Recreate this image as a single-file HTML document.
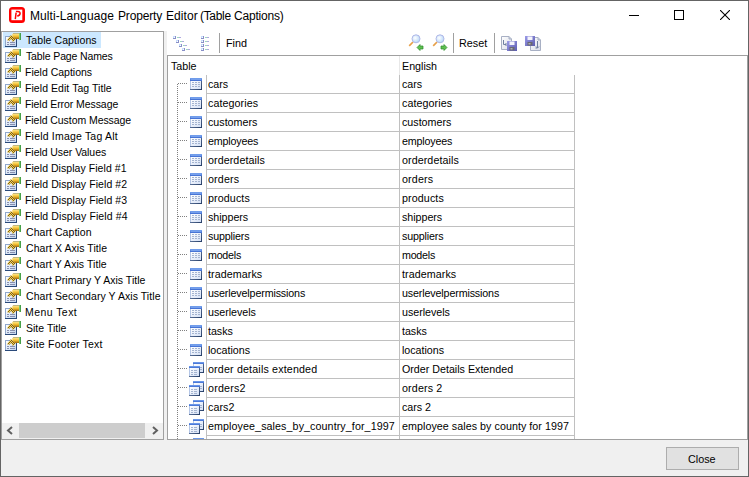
<!DOCTYPE html>
<html><head><meta charset="utf-8"><style>
*{margin:0;padding:0;box-sizing:border-box}
html,body{width:749px;height:477px;overflow:hidden;background:#f0f0f0;font-family:"Liberation Sans",sans-serif;color:#000}
.a{position:absolute}
#frame{left:0;top:0;width:749px;height:477px;border:1px solid #646464;background:#f0f0f0}
#title{left:1px;top:1px;width:747px;height:30px;background:#fff}
.tt{top:8px;font-size:12px;line-height:16px;white-space:nowrap;color:#000}
#list{left:1px;top:31px;width:163px;height:409px;border:1px solid #a0a0a0;background:#fff;overflow:hidden}
.li{position:absolute;left:0;height:16px;width:161px}
.li svg{position:absolute;left:1px;top:0px}
.li span{position:absolute;left:24px;top:0;font-size:10.5px;line-height:16px;white-space:nowrap}
.sel{background:#cce8ff}
#hsb{left:2px;top:423px;width:161px;height:16px;background:#f0f0f0}
#toolbar{left:167px;top:31px;width:581px;height:24px;background:#fff}
#split{left:164px;top:31px;width:3px;height:409px;background:#f0f0f0}
#grid{left:167px;top:55px;width:581px;height:385px;border:1px solid #a0a0a0;background:#fff;overflow:hidden}
.gt{position:absolute;font-size:10.7px;line-height:19px;white-space:nowrap}
.hl{position:absolute;height:1px;background:#c0c0c0}
.vl{position:absolute;width:1px;background:#c0c0c0}
#btn{left:666px;top:447px;width:73px;height:23px;background:#e1e1e1;border:1px solid #adadad}
</style></head><body>
<svg width="0" height="0" style="position:absolute">
<defs>
<linearGradient id="formg" x1="0" y1="0" x2="1" y2="1"><stop offset="0" stop-color="#ffffff"/><stop offset="1" stop-color="#c0d4f0"/></linearGradient>
<linearGradient id="tubeg" x1="0" y1="0" x2="0" y2="1"><stop offset="0" stop-color="#fff4b0"/><stop offset="0.55" stop-color="#f4c030"/><stop offset="1" stop-color="#a06a10"/></linearGradient>
<pattern id="chk" x="0" y="0" width="2" height="2" patternUnits="userSpaceOnUse"><rect width="2" height="2" fill="#f8d850"/><rect width="1" height="1" fill="#7a5a20"/><rect x="1" y="1" width="1" height="1" fill="#7a5a20"/></pattern>
<symbol id="li" viewBox="0 0 20 16">
<rect x="2" y="4" width="12" height="11" fill="#2a4a7a"/>
<rect x="2" y="4" width="11" height="10" fill="#90a8cc"/>
<rect x="3" y="5" width="10" height="9" fill="url(#formg)"/>
<rect x="4" y="10" width="2" height="1" fill="#8890b0"/><rect x="7" y="10" width="5" height="1" fill="#8890b0"/>
<rect x="4" y="12" width="2" height="1" fill="#8890b0"/><rect x="7" y="12" width="5" height="1" fill="#8890b0"/>
<path d="M4 8 L8 3 L13 7 L10 10 L8 7 L6 9 Z" fill="url(#chk)"/>
<path d="M9 2.5 Q9.5 1 11 1 L16 1 L16 7 L12 7 Q10.5 6.5 10 5 Z" fill="url(#tubeg)"/><rect x="10" y="1" width="6" height="0.8" fill="#a09870" opacity="0.8"/>
<rect x="16" y="1" width="2" height="7" fill="#7cc878"/><rect x="17" y="1" width="1" height="7" fill="#48a048"/>
</symbol>
<linearGradient id="tblhead" x1="0" y1="0" x2="0" y2="1"><stop offset="0" stop-color="#7aa6f0"/><stop offset="1" stop-color="#3c6ad0"/></linearGradient>
<linearGradient id="tbody" x1="0" y1="0" x2="1" y2="1"><stop offset="0" stop-color="#ffffff"/><stop offset="1" stop-color="#d4e0f6"/></linearGradient>
<linearGradient id="tshad" x1="0" y1="0" x2="1" y2="1"><stop offset="0" stop-color="#8aa0c8"/><stop offset="1" stop-color="#243c64"/></linearGradient>
<symbol id="tbl" viewBox="0 0 12 12">
<rect x="0" y="0" width="12" height="12" fill="url(#tshad)"/>
<rect x="0" y="0" width="11" height="11" fill="#b4c6e6"/>
<rect x="1" y="3" width="10" height="8" fill="url(#tbody)"/>
<rect x="0" y="0" width="12" height="3" fill="url(#tblhead)"/>
<rect x="1" y="1" width="10" height="1" fill="#88b0f4" opacity="0.6"/>
<g fill="#a4b4d0"><rect x="2" y="4" width="2" height="1"/><rect x="5" y="4" width="2" height="1"/><rect x="8" y="4" width="2" height="1"/>
<rect x="2" y="6" width="2" height="1"/><rect x="5" y="6" width="2" height="1"/><rect x="8" y="6" width="2" height="1"/>
<rect x="2" y="8" width="2" height="1"/><rect x="5" y="8" width="2" height="1"/><rect x="8" y="8" width="2" height="1"/></g>
</symbol>
<symbol id="view" viewBox="0 0 15 15">
<rect x="4" y="0" width="11" height="11" fill="url(#tshad)"/>
<rect x="4" y="0" width="10" height="10" fill="#b4c6e6"/>
<rect x="5" y="2" width="9" height="8" fill="url(#tbody)"/>
<rect x="4" y="0" width="11" height="2" fill="url(#tblhead)"/>
<g fill="#a4b4d0"><rect x="11" y="5" width="2" height="1"/><rect x="11" y="7" width="2" height="1"/></g>
<rect x="0" y="4" width="11" height="11" fill="url(#tshad)"/>
<rect x="0" y="4" width="10" height="10" fill="#b4c6e6"/>
<rect x="1" y="6" width="9" height="8" fill="url(#tbody)"/>
<rect x="0" y="4" width="11" height="2" fill="url(#tblhead)"/>
<g fill="#a4b4d0"><rect x="2" y="8" width="2" height="1"/><rect x="5" y="8" width="3" height="1"/><rect x="2" y="10" width="2" height="1"/><rect x="5" y="10" width="3" height="1"/><rect x="2" y="12" width="2" height="1"/><rect x="5" y="12" width="3" height="1"/></g>
</symbol>
</defs></svg>
<div id="frame" class="a"></div>
<div id="title" class="a"></div>

<svg class="a" style="left:9px;top:7px" width="16" height="16" viewBox="0 0 16 16">
<rect x="0" y="0" width="16" height="16" rx="3.5" fill="#ff0000"/>
<rect x="2.4" y="2.6" width="10.9" height="10.6" fill="#fff"/>
<path d="M6.3 12.2 L7.1 5.6" stroke="#ff0000" stroke-width="1.5" fill="none"/>
<path d="M6.9 4.6 Q11.2 4 11.1 6.4 Q11 8.7 8.2 9.1" stroke="#ff0000" stroke-width="1.5" fill="none"/>
</svg>
<div class="a tt" style="left:30px;letter-spacing:0.085px">Multi-Language</div><div class="a tt" style="left:118px;letter-spacing:-0.171px">Property</div><div class="a tt" style="left:166px;letter-spacing:0.08px">Editor</div><div class="a tt" style="left:200px;letter-spacing:-0.32px">(Table</div><div class="a tt" style="left:234px;letter-spacing:-0.2px">Captions)</div>
<svg class="a" style="left:629px;top:15px" width="10" height="1"><rect width="10" height="1" fill="#000"/></svg>
<svg class="a" style="left:674px;top:10px" width="10" height="10"><rect x="0.5" y="0.5" width="9" height="9" fill="none" stroke="#000"/></svg>
<svg class="a" style="left:720px;top:10px" width="10" height="10"><path d="M0 0 L10 10 M10 0 L0 10" stroke="#000" stroke-width="1.1"/></svg>

<div id="list" class="a">
<div class="li" style="top:0px"><div class="sel a" style="left:1px;top:0;width:98px;height:16px"></div><svg width="20" height="16"><use href="#li"/></svg><span style="letter-spacing:0.085px;">Table Captions</span></div>
<div class="li" style="top:16px"><svg width="20" height="16"><use href="#li"/></svg><span style="letter-spacing:-0.127px;">Table Page Names</span></div>
<div class="li" style="top:32px"><svg width="20" height="16"><use href="#li"/></svg><span style="left:23px;">Field Captions</span></div>
<div class="li" style="top:48px"><svg width="20" height="16"><use href="#li"/></svg><span style="letter-spacing:0.058px;left:23px;">Field Edit Tag Title</span></div>
<div class="li" style="top:64px"><svg width="20" height="16"><use href="#li"/></svg><span style="letter-spacing:-0.072px;left:23px;">Field Error Message</span></div>
<div class="li" style="top:80px"><svg width="20" height="16"><use href="#li"/></svg><span style="letter-spacing:-0.063px;left:23px;">Field Custom Message</span></div>
<div class="li" style="top:96px"><svg width="20" height="16"><use href="#li"/></svg><span style="letter-spacing:0.194px;left:23px;">Field Image Tag Alt</span></div>
<div class="li" style="top:112px"><svg width="20" height="16"><use href="#li"/></svg><span style="letter-spacing:-0.056px;left:23px;">Field User Values</span></div>
<div class="li" style="top:128px"><svg width="20" height="16"><use href="#li"/></svg><span style="letter-spacing:0.052px;left:23px;">Field Display Field #1</span></div>
<div class="li" style="top:144px"><svg width="20" height="16"><use href="#li"/></svg><span style="letter-spacing:0.081px;left:23px;">Field Display Field #2</span></div>
<div class="li" style="top:160px"><svg width="20" height="16"><use href="#li"/></svg><span style="letter-spacing:0.081px;left:23px;">Field Display Field #3</span></div>
<div class="li" style="top:176px"><svg width="20" height="16"><use href="#li"/></svg><span style="letter-spacing:0.1px;left:23px;">Field Display Field #4</span></div>
<div class="li" style="top:192px"><svg width="20" height="16"><use href="#li"/></svg><span style="letter-spacing:0.058px;">Chart Caption</span></div>
<div class="li" style="top:208px"><svg width="20" height="16"><use href="#li"/></svg><span style="letter-spacing:0.065px;">Chart X Axis Title</span></div>
<div class="li" style="top:224px"><svg width="20" height="16"><use href="#li"/></svg><span style="letter-spacing:0.065px;">Chart Y Axis Title</span></div>
<div class="li" style="top:240px"><svg width="20" height="16"><use href="#li"/></svg><span style="letter-spacing:0.032px;">Chart Primary Y Axis Title</span></div>
<div class="li" style="top:256px"><svg width="20" height="16"><use href="#li"/></svg><span style="letter-spacing:0.067px;">Chart Secondary Y Axis Title</span></div>
<div class="li" style="top:272px"><svg width="20" height="16"><use href="#li"/></svg><span style="letter-spacing:0.438px;left:23px;">Menu Text</span></div>
<div class="li" style="top:288px"><svg width="20" height="16"><use href="#li"/></svg><span style="letter-spacing:0.011px;">Site Title</span></div>
<div class="li" style="top:304px"><svg width="20" height="16"><use href="#li"/></svg><span style="letter-spacing:0.207px;">Site Footer Text</span></div>
</div>
<div id="hsb" class="a">
<div class="a" style="left:17px;top:0px;width:126px;height:15px;background:#cdcdcd"></div>
<svg class="a" style="left:4px;top:3px" width="8" height="9" viewBox="0 0 8 9"><path d="M6 1 L2 4.5 L6 8" fill="none" stroke="#606060" stroke-width="2"/></svg>
<svg class="a" style="left:149px;top:3px" width="8" height="9" viewBox="0 0 8 9"><path d="M2 1 L6 4.5 L2 8" fill="none" stroke="#606060" stroke-width="2"/></svg>
</div>
<div id="split" class="a"></div><div id="toolbar" class="a"></div>
<svg class="a" style="left:168px;top:32px" width="50" height="22" viewBox="0 0 50 22"><rect x="5" y="4" width="3" height="3" fill="#8890c8"/><rect x="5" y="4" width="2" height="2" fill="#c8dcfc"/><rect x="6" y="5" width="1" height="1" fill="#fff"/><rect x="9" y="5" width="2" height="1" fill="#a0d8c0"/><rect x="11" y="5" width="2" height="1" fill="#b0a8e0"/><rect x="33" y="4" width="3" height="3" fill="#8890c8"/><rect x="33" y="4" width="2" height="2" fill="#c8dcfc"/><rect x="34" y="5" width="1" height="1" fill="#fff"/><rect x="37" y="5" width="2" height="1" fill="#a0d8c0"/><rect x="39" y="5" width="2" height="1" fill="#b0a8e0"/><rect x="8" y="8" width="3" height="3" fill="#8890c8"/><rect x="8" y="8" width="2" height="2" fill="#c8dcfc"/><rect x="9" y="9" width="1" height="1" fill="#fff"/><rect x="12" y="9" width="2" height="1" fill="#a0d8c0"/><rect x="14" y="9" width="2" height="1" fill="#b0a8e0"/><rect x="33" y="8" width="3" height="3" fill="#8890c8"/><rect x="33" y="8" width="2" height="2" fill="#c8dcfc"/><rect x="34" y="9" width="1" height="1" fill="#fff"/><rect x="37" y="9" width="2" height="1" fill="#a0d8c0"/><rect x="39" y="9" width="2" height="1" fill="#b0a8e0"/><rect x="11" y="12" width="3" height="3" fill="#8890c8"/><rect x="11" y="12" width="2" height="2" fill="#c8dcfc"/><rect x="12" y="13" width="1" height="1" fill="#fff"/><rect x="15" y="13" width="2" height="1" fill="#a0d8c0"/><rect x="17" y="13" width="2" height="1" fill="#b0a8e0"/><rect x="33" y="12" width="3" height="3" fill="#8890c8"/><rect x="33" y="12" width="2" height="2" fill="#c8dcfc"/><rect x="34" y="13" width="1" height="1" fill="#fff"/><rect x="37" y="13" width="2" height="1" fill="#a0d8c0"/><rect x="39" y="13" width="2" height="1" fill="#b0a8e0"/><rect x="14" y="16" width="3" height="3" fill="#8890c8"/><rect x="14" y="16" width="2" height="2" fill="#c8dcfc"/><rect x="15" y="17" width="1" height="1" fill="#fff"/><rect x="18" y="17" width="2" height="1" fill="#a0d8c0"/><rect x="20" y="17" width="2" height="1" fill="#b0a8e0"/><rect x="33" y="16" width="3" height="3" fill="#8890c8"/><rect x="33" y="16" width="2" height="2" fill="#c8dcfc"/><rect x="34" y="17" width="1" height="1" fill="#fff"/><rect x="37" y="17" width="2" height="1" fill="#a0d8c0"/><rect x="39" y="17" width="2" height="1" fill="#b0a8e0"/></svg>
<div class="a" style="left:219px;top:33px;width:1px;height:20px;background:#a0a0a0"></div>
<div class="a" style="left:226px;top:35px;font-size:10.8px;line-height:16px">Find</div>
<svg class="a" style="left:406px;top:33px" width="22" height="20" viewBox="0 0 22 20"><defs><radialGradient id="lens406" cx="0.4" cy="0.4" r="0.6"><stop offset="0" stop-color="#ffffff"/><stop offset="1" stop-color="#b8d8f8"/></radialGradient></defs><line x1="3.2" y1="12.8" x2="7" y2="9" stroke="#e8a048" stroke-width="1.7"/><circle cx="10" cy="5.8" r="4" fill="url(#lens406)" stroke="#b0b8e8" stroke-width="1"/><path d="M11 14.5 L14 11.5 L14 13 L17 13 L17 16 L14 16 L14 17.5 Z" fill="#60c050" stroke="#2a8a2a" stroke-width="0.7" stroke-linejoin="round"/></svg>
<svg class="a" style="left:430px;top:33px" width="22" height="20" viewBox="0 0 22 20"><defs><radialGradient id="lens430" cx="0.4" cy="0.4" r="0.6"><stop offset="0" stop-color="#ffffff"/><stop offset="1" stop-color="#b8d8f8"/></radialGradient></defs><line x1="3.2" y1="12.8" x2="7" y2="9" stroke="#e8a048" stroke-width="1.7"/><circle cx="10" cy="5.8" r="4" fill="url(#lens430)" stroke="#b0b8e8" stroke-width="1"/><path d="M17 14.5 L14 11.5 L14 13 L11 13 L11 16 L14 16 L14 17.5 Z" fill="#60c050" stroke="#2a8a2a" stroke-width="0.7" stroke-linejoin="round"/></svg>
<div class="a" style="left:453px;top:33px;width:1px;height:20px;background:#a0a0a0"></div>
<div class="a" style="left:459px;top:35px;font-size:10.8px;line-height:16px">Reset</div>
<div class="a" style="left:494px;top:33px;width:1px;height:20px;background:#a0a0a0"></div>
<svg class="a" style="left:501px;top:36px" width="16" height="15" viewBox="0 0 16 15">
<defs><linearGradient id="docg" x1="0" y1="0" x2="1" y2="1"><stop offset="0" stop-color="#ffffff"/><stop offset="1" stop-color="#d8dce8"/></linearGradient>
<linearGradient id="flg" x1="0" y1="0" x2="1" y2="1"><stop offset="0" stop-color="#9c9ce8"/><stop offset="1" stop-color="#5c5cb0"/></linearGradient></defs>
<path d="M0.5 0.5 H8 L10.5 3 V13.5 H0.5 Z" fill="url(#docg)" stroke="#a8b0c4"/>
<path d="M8 0.5 V3 H10.5" fill="#c8d0e0" stroke="#a8b0c4"/>
<path d="M2.5 4 V8.5 H5" fill="none" stroke="#7080a0" stroke-width="1"/><path d="M4.5 7 L6 8.5 L4.5 10" fill="none" stroke="#7080a0"/>
<rect x="6" y="5" width="10" height="10" fill="url(#flg)"/>
<rect x="8.5" y="5.5" width="5" height="3.5" fill="#f4f4fc"/>
<rect x="8.5" y="11" width="5" height="3.5" fill="#686870"/><rect x="9.5" y="12" width="2" height="1.5" fill="#b0b0b8"/>
</svg>
<svg class="a" style="left:525px;top:36px" width="17" height="15" viewBox="0 0 17 15">
<path d="M5.5 1.5 H13 L15.5 4 V14.5 H5.5 Z" fill="url(#docg)" stroke="#a8b0c4"/>
<path d="M13 1.5 V4 H15.5" fill="#c8d0e0" stroke="#a8b0c4"/>
<path d="M12.5 5 V12 H10.5" fill="none" stroke="#7080a0"/><path d="M14 10.5 L12.5 12 L11 10.5" fill="none" stroke="#7080a0"/>
<rect x="0" y="0" width="10" height="10" fill="url(#flg)"/>
<rect x="2.5" y="0.5" width="5" height="3.5" fill="#f4f4fc"/>
<rect x="2.5" y="6" width="5" height="3.5" fill="#686870"/><rect x="3.5" y="7" width="2" height="1.5" fill="#b0b0b8"/>
</svg>
<div id="grid" class="a">
<div class="gt" style="left:3px;top:1px">Table</div>
<div class="gt" style="left:234px;top:1px">English</div>
<div class="vl" style="left:231px;top:0;height:19px;background:#e8e8e8"></div>
<div class="vl" style="left:38px;top:19px;height:400px"></div>
<div class="vl" style="left:231px;top:19px;height:400px"></div>
<div class="vl" style="left:406px;top:19px;height:400px"></div>
<div class="a" style="left:9px;top:28px;width:1px;height:400px;background:repeating-linear-gradient(#808080 0 1px, transparent 1px 2px)"></div>
<div class="hl" style="left:38px;top:37px;width:369px"></div>
<div class="a" style="left:10px;top:27px;width:10px;height:1px;background:repeating-linear-gradient(90deg,#808080 0 1px, transparent 1px 2px)"></div>
<svg class="a" style="left:22px;top:22px" width="12" height="12"><use href="#tbl"/></svg>
<div class="gt" style="left:40px;top:19px;letter-spacing:-0.033px;">cars</div>
<div class="gt" style="left:234px;top:19px;letter-spacing:-0.033px;">cars</div>
<div class="hl" style="left:38px;top:56px;width:369px"></div>
<div class="a" style="left:10px;top:46px;width:10px;height:1px;background:repeating-linear-gradient(90deg,#808080 0 1px, transparent 1px 2px)"></div>
<svg class="a" style="left:22px;top:41px" width="12" height="12"><use href="#tbl"/></svg>
<div class="gt" style="left:40px;top:38px;letter-spacing:0.089px;">categories</div>
<div class="gt" style="left:234px;top:38px;letter-spacing:0.089px;">categories</div>
<div class="hl" style="left:38px;top:75px;width:369px"></div>
<div class="a" style="left:10px;top:65px;width:10px;height:1px;background:repeating-linear-gradient(90deg,#808080 0 1px, transparent 1px 2px)"></div>
<svg class="a" style="left:22px;top:60px" width="12" height="12"><use href="#tbl"/></svg>
<div class="gt" style="left:40px;top:57px;">customers</div>
<div class="gt" style="left:234px;top:57px;">customers</div>
<div class="hl" style="left:38px;top:94px;width:369px"></div>
<div class="a" style="left:10px;top:84px;width:10px;height:1px;background:repeating-linear-gradient(90deg,#808080 0 1px, transparent 1px 2px)"></div>
<svg class="a" style="left:22px;top:79px" width="12" height="12"><use href="#tbl"/></svg>
<div class="gt" style="left:40px;top:76px;letter-spacing:-0.162px;">employees</div>
<div class="gt" style="left:234px;top:76px;letter-spacing:-0.162px;">employees</div>
<div class="hl" style="left:38px;top:113px;width:369px"></div>
<div class="a" style="left:10px;top:103px;width:10px;height:1px;background:repeating-linear-gradient(90deg,#808080 0 1px, transparent 1px 2px)"></div>
<svg class="a" style="left:22px;top:98px" width="12" height="12"><use href="#tbl"/></svg>
<div class="gt" style="left:40px;top:95px;letter-spacing:0.082px;">orderdetails</div>
<div class="gt" style="left:234px;top:95px;letter-spacing:0.082px;">orderdetails</div>
<div class="hl" style="left:38px;top:132px;width:369px"></div>
<div class="a" style="left:10px;top:122px;width:10px;height:1px;background:repeating-linear-gradient(90deg,#808080 0 1px, transparent 1px 2px)"></div>
<svg class="a" style="left:22px;top:117px" width="12" height="12"><use href="#tbl"/></svg>
<div class="gt" style="left:40px;top:114px;letter-spacing:0.16px;">orders</div>
<div class="gt" style="left:234px;top:114px;letter-spacing:0.16px;">orders</div>
<div class="hl" style="left:38px;top:151px;width:369px"></div>
<div class="a" style="left:10px;top:141px;width:10px;height:1px;background:repeating-linear-gradient(90deg,#808080 0 1px, transparent 1px 2px)"></div>
<svg class="a" style="left:22px;top:136px" width="12" height="12"><use href="#tbl"/></svg>
<div class="gt" style="left:40px;top:133px;letter-spacing:0.114px;">products</div>
<div class="gt" style="left:234px;top:133px;letter-spacing:0.114px;">products</div>
<div class="hl" style="left:38px;top:170px;width:369px"></div>
<div class="a" style="left:10px;top:160px;width:10px;height:1px;background:repeating-linear-gradient(90deg,#808080 0 1px, transparent 1px 2px)"></div>
<svg class="a" style="left:22px;top:155px" width="12" height="12"><use href="#tbl"/></svg>
<div class="gt" style="left:40px;top:152px;letter-spacing:-0.029px;">shippers</div>
<div class="gt" style="left:234px;top:152px;letter-spacing:-0.029px;">shippers</div>
<div class="hl" style="left:38px;top:189px;width:369px"></div>
<div class="a" style="left:10px;top:179px;width:10px;height:1px;background:repeating-linear-gradient(90deg,#808080 0 1px, transparent 1px 2px)"></div>
<svg class="a" style="left:22px;top:174px" width="12" height="12"><use href="#tbl"/></svg>
<div class="gt" style="left:40px;top:171px;letter-spacing:-0.15px;">suppliers</div>
<div class="gt" style="left:234px;top:171px;letter-spacing:-0.15px;">suppliers</div>
<div class="hl" style="left:38px;top:208px;width:369px"></div>
<div class="a" style="left:10px;top:198px;width:10px;height:1px;background:repeating-linear-gradient(90deg,#808080 0 1px, transparent 1px 2px)"></div>
<svg class="a" style="left:22px;top:193px" width="12" height="12"><use href="#tbl"/></svg>
<div class="gt" style="left:40px;top:190px;letter-spacing:-0.24px;">models</div>
<div class="gt" style="left:234px;top:190px;letter-spacing:-0.24px;">models</div>
<div class="hl" style="left:38px;top:227px;width:369px"></div>
<div class="a" style="left:10px;top:217px;width:10px;height:1px;background:repeating-linear-gradient(90deg,#808080 0 1px, transparent 1px 2px)"></div>
<svg class="a" style="left:22px;top:212px" width="12" height="12"><use href="#tbl"/></svg>
<div class="gt" style="left:40px;top:209px;letter-spacing:0.078px;">trademarks</div>
<div class="gt" style="left:234px;top:209px;letter-spacing:0.078px;">trademarks</div>
<div class="hl" style="left:38px;top:246px;width:369px"></div>
<div class="a" style="left:10px;top:236px;width:10px;height:1px;background:repeating-linear-gradient(90deg,#808080 0 1px, transparent 1px 2px)"></div>
<svg class="a" style="left:22px;top:231px" width="12" height="12"><use href="#tbl"/></svg>
<div class="gt" style="left:40px;top:228px;letter-spacing:-0.132px;">userlevelpermissions</div>
<div class="gt" style="left:234px;top:228px;letter-spacing:-0.132px;">userlevelpermissions</div>
<div class="hl" style="left:38px;top:265px;width:369px"></div>
<div class="a" style="left:10px;top:255px;width:10px;height:1px;background:repeating-linear-gradient(90deg,#808080 0 1px, transparent 1px 2px)"></div>
<svg class="a" style="left:22px;top:250px" width="12" height="12"><use href="#tbl"/></svg>
<div class="gt" style="left:40px;top:247px;letter-spacing:-0.022px;">userlevels</div>
<div class="gt" style="left:234px;top:247px;letter-spacing:-0.022px;">userlevels</div>
<div class="hl" style="left:38px;top:284px;width:369px"></div>
<div class="a" style="left:10px;top:274px;width:10px;height:1px;background:repeating-linear-gradient(90deg,#808080 0 1px, transparent 1px 2px)"></div>
<svg class="a" style="left:22px;top:269px" width="12" height="12"><use href="#tbl"/></svg>
<div class="gt" style="left:40px;top:266px;letter-spacing:-0.025px;">tasks</div>
<div class="gt" style="left:234px;top:266px;letter-spacing:-0.025px;">tasks</div>
<div class="hl" style="left:38px;top:303px;width:369px"></div>
<div class="a" style="left:10px;top:293px;width:10px;height:1px;background:repeating-linear-gradient(90deg,#808080 0 1px, transparent 1px 2px)"></div>
<svg class="a" style="left:22px;top:288px" width="12" height="12"><use href="#tbl"/></svg>
<div class="gt" style="left:40px;top:285px;letter-spacing:-0.025px;">locations</div>
<div class="gt" style="left:234px;top:285px;letter-spacing:-0.025px;">locations</div>
<div class="hl" style="left:38px;top:322px;width:369px"></div>
<div class="a" style="left:10px;top:312px;width:10px;height:1px;background:repeating-linear-gradient(90deg,#808080 0 1px, transparent 1px 2px)"></div>
<svg class="a" style="left:21px;top:306px" width="15" height="15"><use href="#view"/></svg>
<div class="gt" style="left:40px;top:304px;letter-spacing:0.162px;">order details extended</div>
<div class="gt" style="left:234px;top:304px;">Order Details Extended</div>
<div class="hl" style="left:38px;top:341px;width:369px"></div>
<div class="a" style="left:10px;top:331px;width:10px;height:1px;background:repeating-linear-gradient(90deg,#808080 0 1px, transparent 1px 2px)"></div>
<svg class="a" style="left:21px;top:325px" width="15" height="15"><use href="#view"/></svg>
<div class="gt" style="left:40px;top:323px;letter-spacing:0.217px;">orders2</div>
<div class="gt" style="left:234px;top:323px;letter-spacing:0.157px;">orders 2</div>
<div class="hl" style="left:38px;top:360px;width:369px"></div>
<div class="a" style="left:10px;top:350px;width:10px;height:1px;background:repeating-linear-gradient(90deg,#808080 0 1px, transparent 1px 2px)"></div>
<svg class="a" style="left:21px;top:344px" width="15" height="15"><use href="#view"/></svg>
<div class="gt" style="left:40px;top:342px;letter-spacing:0.075px;">cars2</div>
<div class="gt" style="left:234px;top:342px;letter-spacing:-0.02px;">cars 2</div>
<div class="hl" style="left:38px;top:379px;width:369px"></div>
<div class="a" style="left:10px;top:369px;width:10px;height:1px;background:repeating-linear-gradient(90deg,#808080 0 1px, transparent 1px 2px)"></div>
<svg class="a" style="left:21px;top:363px" width="15" height="15"><use href="#view"/></svg>
<div class="gt" style="left:40px;top:361px;letter-spacing:0.094px;">employee_sales_by_country_for_1997</div>
<div class="gt" style="left:234px;top:361px;letter-spacing:0.056px;">employee sales by county for 1997</div>
<div class="hl" style="left:38px;top:398px;width:369px"></div>
<div class="a" style="left:10px;top:388px;width:10px;height:1px;background:repeating-linear-gradient(90deg,#808080 0 1px, transparent 1px 2px)"></div>
<svg class="a" style="left:21px;top:382px" width="15" height="15"><use href="#view"/></svg>
<div class="gt" style="left:40px;top:380px;"></div>
<div class="gt" style="left:234px;top:380px;"></div>
</div>
<div id="btn" class="a"></div><div class="a" style="left:688px;top:451px;font-size:10.8px;line-height:16px">Close</div>
</body></html>
